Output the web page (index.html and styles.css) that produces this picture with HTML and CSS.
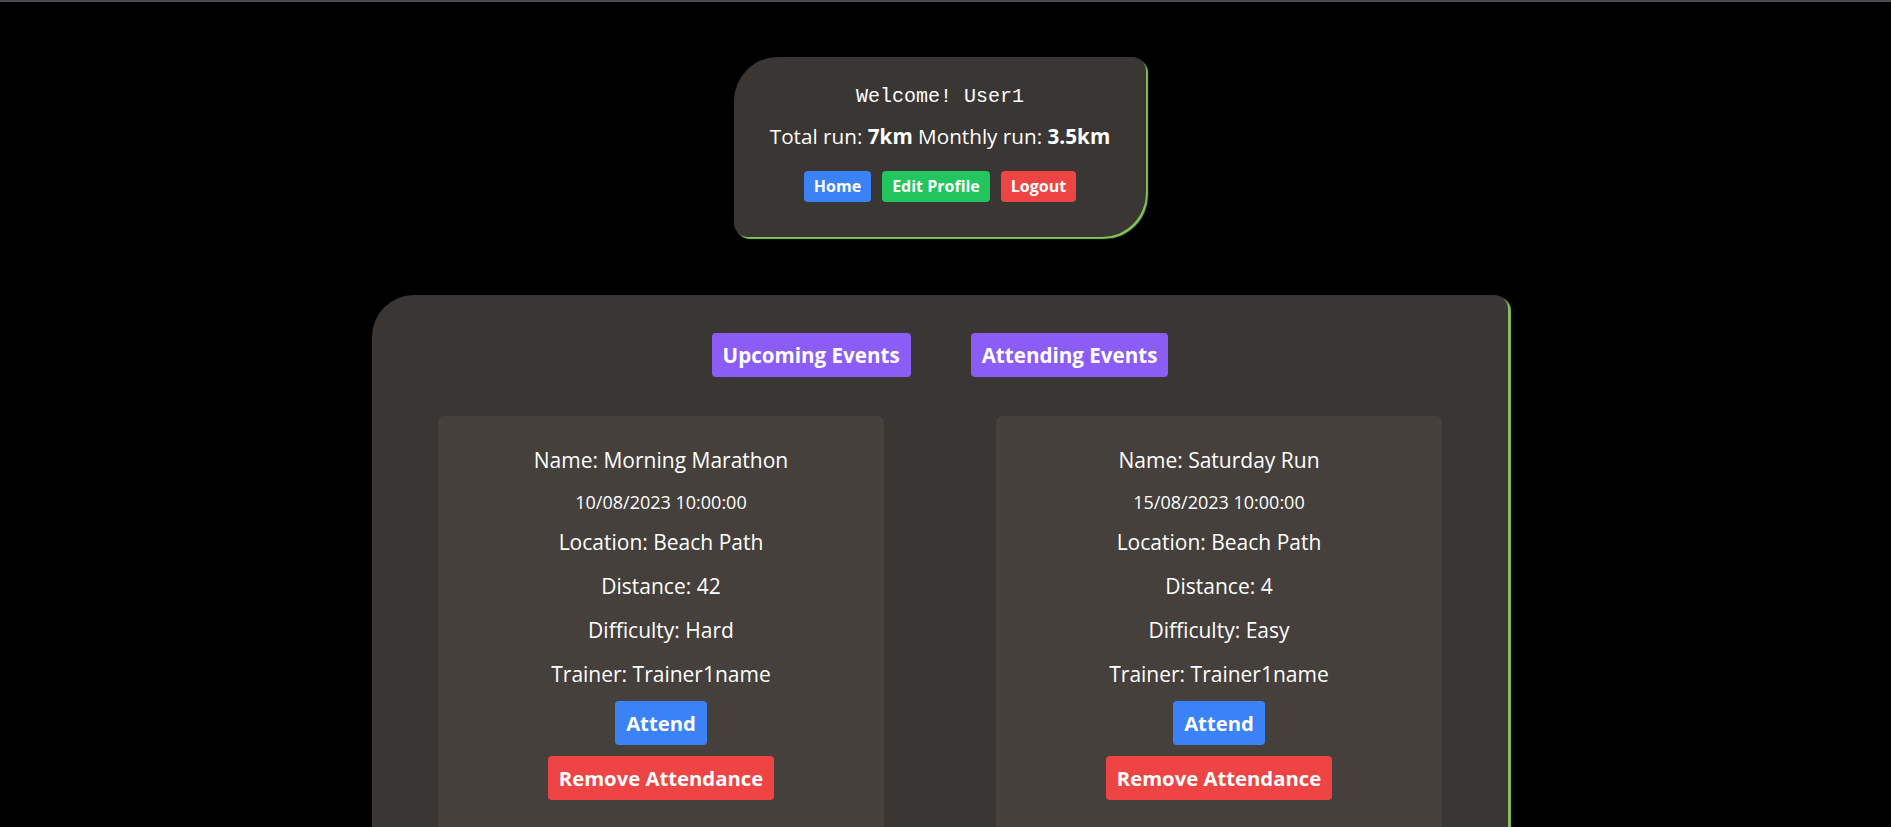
FILE: index.html
```html
<!DOCTYPE html>
<html lang="en">
<head>
<meta charset="utf-8">
<title>Running Club</title>
<link rel="stylesheet" href="styles.css">
</head>
<body>
<div class="topbar"></div>
<div class="page">
  <section class="profile">
    <h1 class="welcome">Welcome! User1</h1>
    <p class="totals">Total run: <b>7km</b> Monthly run: <b>3.5km</b></p>
    <div class="nav">
      <button class="btn-sm blue">Home</button>
      <button class="btn-sm green">Edit Profile</button>
      <button class="btn-sm red">Logout</button>
    </div>
  </section>

  <section class="panel">
    <div class="tabs">
      <button class="tab">Upcoming Events</button>
      <button class="tab">Attending Events</button>
    </div>
    <div class="events">
      <div class="event">
        <p class="name">Name: Morning Marathon</p>
        <p class="date">10/08/2023 10:00:00</p>
        <p class="field first">Location: Beach Path</p>
        <p class="field">Distance: 42</p>
        <p class="field">Difficulty: Hard</p>
        <p class="field">Trainer: Trainer1name</p>
        <button class="btn blue attend">Attend</button>
        <button class="btn red">Remove Attendance</button>
      </div>
      <div class="event">
        <p class="name">Name: Saturday Run</p>
        <p class="date">15/08/2023 10:00:00</p>
        <p class="field first">Location: Beach Path</p>
        <p class="field">Distance: 4</p>
        <p class="field">Difficulty: Easy</p>
        <p class="field">Trainer: Trainer1name</p>
        <button class="btn blue attend">Attend</button>
        <button class="btn red">Remove Attendance</button>
      </div>
    </div>
  </section>
</div>
</body>
</html>
```

FILE: styles.css
```css
html, body {
  margin: 0;
  padding: 0;
  background: #000;
  height: 100%;
  overflow: hidden;
}
body {
  font-family: "Open Sans", "Noto Sans", sans-serif;
  color: #fff;
}
.topbar {
  height: 2px;
  background: #4a4a52;
}
.page {
  width: 1880px;
  display: flex;
  flex-direction: column;
  align-items: center;
}
.profile {
  margin-top: 55px;
  width: 412px;
  box-sizing: border-box;
  padding: 26px 0 35px;
  background: #3a3634;
  border-radius: 44px 14px 44px 14px;
  box-shadow: 2px 2px 1px #86c45a;
  display: flex;
  flex-direction: column;
  align-items: center;
}
.welcome {
  margin: 0;
  font-family: "Liberation Mono", "DejaVu Sans Mono", monospace;
  font-weight: normal;
  font-size: 20px;
  line-height: 28px;
}
.totals {
  margin: 11px 0 0;
  font-size: 20.7px;
  line-height: 28px;
}
.totals b { font-weight: 700; }
.nav {
  margin-top: 21px;
  display: flex;
  gap: 11px;
}
button {
  font-family: inherit;
  border: 0;
  color: #fff;
  cursor: pointer;
}
.btn-sm {
  font-size: 16px;
  font-weight: 700;
  line-height: 23px;
  padding: 4px 10px;
  border-radius: 4px;
}
.blue { background: #3b82f6; }
.green { background: #22c55e; }
.red { background: #ef4444; }

.panel {
  margin-top: 58px;
  width: 1136px;
  height: 600px;
  box-sizing: border-box;
  padding-top: 38px;
  background: #3a3634;
  border-radius: 42px 14px 0 0;
  box-shadow: 3px 2px 1px #86c45a;
}
.tabs {
  display: flex;
  justify-content: center;
  gap: 60px;
}
.tab {
  background: #8b5cf6;
  font-size: 20.6px;
  font-weight: 700;
  line-height: 28px;
  padding: 8px 11px;
  border-radius: 4px;
}
.events {
  margin-top: 39px;
  display: flex;
  justify-content: center;
  gap: 112px;
}
.event {
  width: 446px;
  height: 460px;
  box-sizing: border-box;
  padding-top: 30px;
  background: #45403c;
  border-radius: 6px;
  display: flex;
  flex-direction: column;
  align-items: center;
}
.event p {
  margin: 0;
  text-align: center;
}
.name {
  font-size: 21px;
  line-height: 28px;
}
.event .date {
  margin-top: 16px;
  font-size: 18px;
  line-height: 24px;
}
.event .field {
  margin-top: 16px;
  font-size: 21px;
  line-height: 28px;
}
.event .field.first {
  margin-top: 14px;
}
.btn {
  font-size: 20.3px;
  font-weight: 700;
  line-height: 28px;
  padding: 8px 11px;
  border-radius: 4px;
}
.attend {
  margin-top: 13px;
  margin-bottom: 11px;
}
```
